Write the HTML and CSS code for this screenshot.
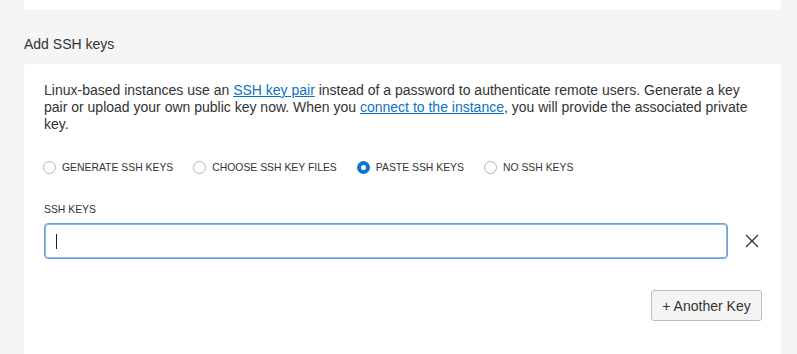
FILE: index.html
```html
<!DOCTYPE html>
<html>
<head>
<meta charset="utf-8">
<link rel="stylesheet" href="styles.css">
</head>
<body>
<div class="page">
  <div class="card card-prev"></div>
  <h2 class="section-title">Add SSH keys</h2>
  <div class="card card-main">
    <p class="intro">Linux-based instances use an <a href="#">SSH key pair</a> instead of a password to authenticate remote users. Generate a key pair or upload your own public key now. When you <a href="#">connect to the instance</a>, you will provide the associated private key.</p>
    <div class="radios">
      <label class="radio"><span class="dot"></span>GENERATE SSH KEYS</label>
      <label class="radio"><span class="dot"></span>CHOOSE SSH KEY FILES</label>
      <label class="radio"><span class="dot checked"></span>PASTE SSH KEYS</label>
      <label class="radio"><span class="dot"></span>NO SSH KEYS</label>
    </div>
    <div class="field-label">SSH KEYS</div>
    <div class="key-row">
      <div class="input"><span class="caret"></span></div>
      <div class="remove">
        <svg width="14" height="14" viewBox="0 0 14 14"><path d="M1 1L13 13M13 1L1 13" stroke="#333" stroke-width="1.3" fill="none"/></svg>
      </div>
    </div>
    <div class="actions">
      <button class="btn">+ Another Key</button>
    </div>
  </div>
</div>
</body>
</html>
```
FILE: styles.css
```css
html, body {
  margin: 0;
  padding: 0;
  background: #f5f5f5;
  font-family: "Liberation Sans", Arial, sans-serif;
  color: #333;
}
.page {
  padding: 0 16px 0 24px;
}
.card {
  background: #fff;
  border-radius: 3px;
}
.card-prev {
  height: 10px;
  border-radius: 0 0 3px 3px;
}
.section-title {
  margin: 0;
  padding: 26px 0 0 0;
  height: 54px;
  box-sizing: border-box;
  font-size: 14px;
  font-weight: normal;
  line-height: 17px;
  color: #333;
}
.card-main {
  padding: 18px 19px 40px 20px;
  border-radius: 3px 3px 0 0;
  height: 300px;
}
.intro {
  margin: 0;
  font-size: 14px;
  line-height: 17px;
  color: #333;
}
.intro a {
  color: #0b72c4;
  text-decoration: underline;
}
.radios {
  display: flex;
  align-items: center;
  margin-top: 27px;
  height: 14px;
  margin-left: -1px;
}
.radio {
  display: flex;
  align-items: center;
  font-size: 10.4px;
  color: #333;
  margin-right: 20px;
}
.dot {
  width: 13px;
  height: 13px;
  border: 1px solid #b5b5b5;
  border-radius: 50%;
  margin-right: 6px;
  box-sizing: border-box;
  background: #fff;
}
.dot.checked {
  border: 4px solid #1074cc;
  background: #fff;
}
.field-label {
  margin-top: 29px;
  font-size: 10.4px;
  line-height: 14px;
  color: #333;
}
.key-row {
  display: flex;
  align-items: center;
  margin-top: 6px;
}
.input {
  flex: 1;
  height: 36px;
  box-sizing: border-box;
  border: 1px solid #6a9fd8;
  box-shadow: 0 0 0 1px #8fb8e6 inset;
  border-radius: 4px;
  display: flex;
  align-items: center;
  padding-left: 11px;
}
.caret {
  width: 1px;
  height: 15px;
  background: #222;
}
.remove {
  width: 34px;
  box-sizing: border-box;
  display: flex;
  justify-content: flex-end;
  padding-right: 3px;
}
.actions {
  display: flex;
  justify-content: flex-end;
  margin-top: 31px;
  padding-right: 0;
}
.btn {
  font-family: "Liberation Sans", Arial, sans-serif;
  font-size: 14px;
  color: #333;
  background: #f4f4f4;
  border: 1px solid #bdbdbd;
  border-radius: 3px;
  height: 31px;
  width: 111px;
  padding: 0;
}
```
